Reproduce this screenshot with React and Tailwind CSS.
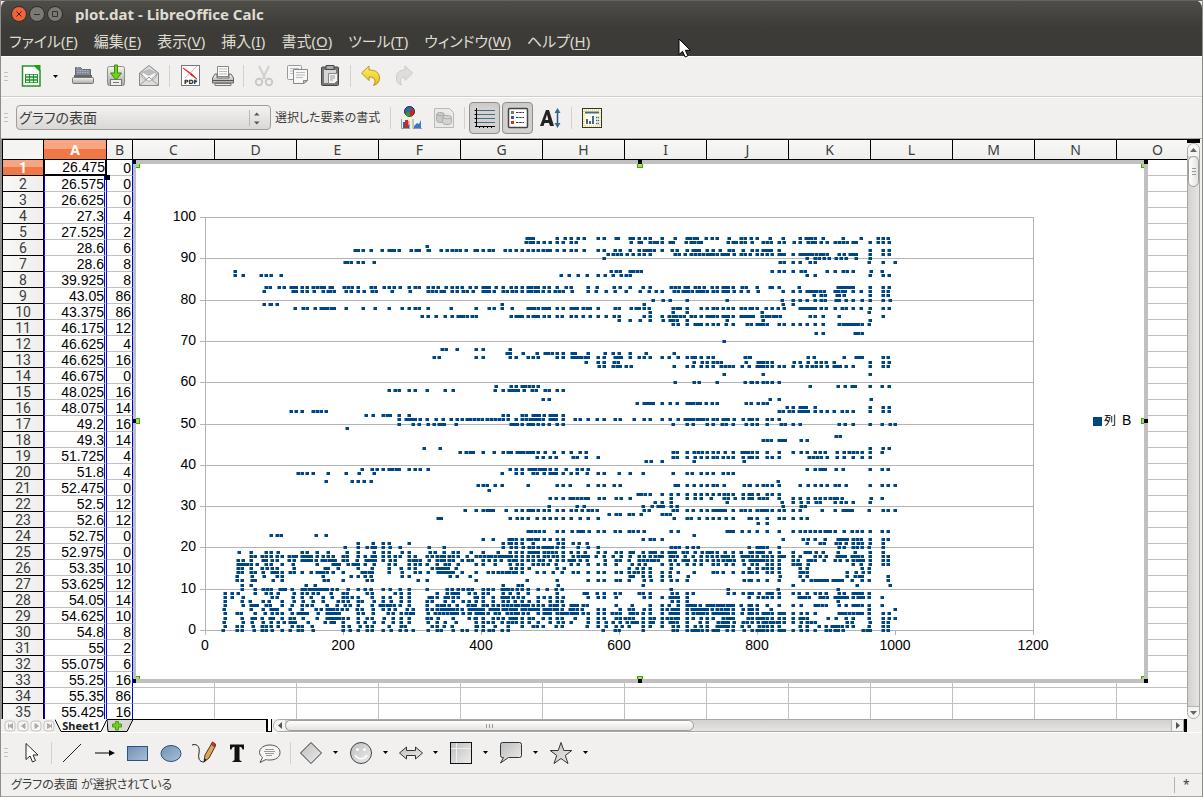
import React from "react";

/* ---------- scatter data: [value, samples of the left, middle and right block] ---------- */
const BLOCKS = [190, 470, 750];
const SAMPLES = [
  [95, "", "170-190 260 285 304 325 343 383 403 437 445 479 490 508 525 540 576 615 650-682 707 725 742 776 812 824", "3 22 59 100 149 167-182 196 220 278 334 385 400 415"],
  [94, "", "167-190 203 221 240 260 278 302 319 483 508 514 540 551 562 576 599 608 648 662-694 775 788 797 812 826", "5 38 52 64 88 103 131 149 173-196 214 232 256 268-292 308 319 359 385 398 418"],
  [93, "711", "", ""],
  [92, "496-505 520 543 577 596-612 628 664-677 688 713 718 754 770 785 799 811 829", "15-22 38 58 70 106-119 137 155 173 188 203 220-240 260 282 302 319 343 383 403 436 450 481 508 523-540 553 577 605 622 652 670-688 710 728 751 776 790 818", "5 22 38-64 86 359 398 416"],
  [91, "", "415 430-453 470 490 508 522 540 615-628 646 662 676 688 700 710-740 755-775 792 812 825 840", "0 22 37 52-66 88-103 130 149-197 209-230 268 281 300-319 359 398 416"],
  [90, "", "402", "170 194 208 223 238 257 274 287 317 359"],
  [89, "466 470 484 503 520 551", "", "89 103 128 149 181 194 358 398 436"],
  [87, "134", "422 437-450 479 490 502 514", "65 88 103 130 152 166 232 255 278 292 310 362 396"],
  [86, "134 160 214 229 244 274", "272 298 325 352 384 406 430 453 468-480", "171 194 359 400 417"],
  [83, "229-240 268 282 302 312 319 337 352 370 382 392-403 421 425 461-473 487 505 543-555 583-596 613 631 658 674 686 715 730 745 769 785 800 817", "0 18 38-58 77 100 124 139 157 173-204 222 237 260 287 303 354 382 433 449 479 520 540 604-614 628 645-655 676 688 703 726 742 758-775 790 815 829", "22 59 66 86 148 265-300 310 359 398 416"],
  [82, "222 310 319 337 352 371 400 413-421 432 469 484 503 521 545-557 607 661 715 727 739 753 763 787 800 819 832 848", "9 40-56 71 98-112 125 137 157 173-205 220 237 256-267 279 307 354 377 407 434 469 511 537 557 577 612 623 640-655 665 680-710 728 742 758-775 792 813 835", "24 100 130 149 170-197 209 223 255-285 310 334 360 398 415"],
  [81, "", "", "191 214 226 260 268 282 360 398 415"],
  [80, "", "550 579 599 652 772", "97 129 149 172 194 214 226 257 268 289 310 335 360 398 421"],
  [79, "223 239 244 262", "96 521", "100 130"],
  [78, "316 338 350 374 393-431 469 519 555 597 637 658 674 688 713 784", "18 56 71 97 125 173-203 220-238 260 279 302 311 322 340-360 383 434 448 484 499 508 522 538 610-630 650 692 710 728 742 760 775 790 812 824 840", "5 22 49 67 83 101 149-185 196 214 228 255 275 289 310 334 359 398 416"],
  [77, "", "540 610 652", "37 358"],
  [76, "695 713 739 764 785 803-818 832", "7 19 124 137-157 173 188-204 221 237 262 275 302 318 340 360 383 407 433 448 523 540 576 598-630 643 662-676 692 710-740 758-775 790 812-848", "5 37-90 181 196 220 266 398"],
  [75, "", "448 480 511 540 580 600-620 652 770", "38 361"],
  [74, "", "610 623 650 676-692 710 728 743 768 790 830", "3 22-39 52 88 103 128 149 172 194 220 268-325 335 358"],
  [72, "", "", "197 220 315-324 337"],
  [70, "", "763", ""],
  [68, "757 768 800", "18 40 121", ""],
  [67, "", "110-119 158 201 225-245 260 278 307-315 354 404 430 446 480 528 612", ""],
  [66, "732 748", "18 38 121 139 173 190 204 260 278 305-354 383 403 436-452 480 508 522 540 577 596 625 652 665-676 692 714 728 825 837", "0 175 193 283 318-335 398 415"],
  [65, "", "349 385 403 433-445 673 695 710 728 742 754 828", "25-40 52 67 131 149 173 197 214 228 253 361 398 416"],
  [64, "", "388 403 430-450 467 482 613 652 670 692 710 728 752 766-788 815 837", "22-40 52 65 88 103 130 152 172-185 197 214 230 253-270 287 308 360 398 414"],
  [62, "", "763", "38 359"],
  [60, "", "614 673 686 742 825 845", "4 22 38 52 65 88"],
  [59, "", "79 124 139 155-165 178 190 204", "180 265 285 307-315 360 397 416"],
  [58, "597 615 628 658 674 712 766 788", "75 100 116-145 161 187 199 224 238 260 280", ""],
  [56, "", "218 236", "60 88 362"],
  [55, "", "501 523-550 576 600 620 650-690 708 726 742 827 843", "3 25 40 52"],
  [54, "", "", "111 130 149-167 194 359 398 416"],
  [53, "304 319 337 368-380 394 407", "", "86 100 118 130 147-174 194 212 230 252 277 291 308 359 398 416"],
  [52, "527 549 580-601 628 656", "100 115 155-167 190-206 221 240-258 278", ""],
  [51, "626 647 657-676 690 712 737 758 784 800 815 830", "0-24 37 52-86 98 115 139 157-180 190-206 220 240-258 278 316-330 354 382 402 436 450 493 523 540 576 600 625 645-660 670-700 712 728 740 760-775 792 820 837", "5 22 50 67 86"],
  [50, "628 668 688 715 732 748-763 798", "124-142 157 175-190 204 220 238 260 278 608 652 668 710 728 755 768 790 828", "5 22 52 92 106 130 151 268 285 308 360 396 421 436"],
  [49, "470", "", ""],
  [47, "", "", "258-269"],
  [46, "", "", "40 52 64 88-104 152 172"],
  [44, "702 749", "", "361 398 416"],
  [43, "810 828-850", "5 39 73 98 115 124 140-190 204 225 252 279 302 330 349 608 622 650 673-695 712 728 745 765 790 816-835", "5 22 52 88 130 152 170 194 210 226 262 283 298-310 321 335 360 397"],
  [42, "", "202 220 241 258 310 322 347 383 608 622 652 676 692 710 728 742 758 775 790 820 837", "5 22 52 66 88 176-190 202 214 232 260 283 308 335 360"],
  [41, "", "529 542 575 673 823", ""],
  [39, "517 547-560 580 596-628 657 674 689 714", "121 139 157 177-225 240 258 289 322 337 353", "170 194 210-226 257 280 360 396 415"],
  [38, "323 337 350 370 415 467 507 553", "97 139 157 188-200 221 241-258 278 302 320 350 383 403 446 481 520 610 650 665 692 710 728 760 775 790", ""],
  [36, "407 486 505 521 543", "", "85"],
  [35, "", "25 40 52 75 96 175 260 278 300 354 383 403 433 450 614 625 650 673 692 710 728 742 763 822 838", "0 22 38 52 65 88 149 173 194 214 230 255 268 287 360 396 415 436"],
  [34, "", "58", ""],
  [33, "", "503-513 525 540 577 604 625 650 676 692 710 728 748 763 775 790 818 838", "5 25 52 67 88"],
  [32, "", "241 258 279 300-310 322-345 354 386 403 437 453 480 604 652 676 692 723 763-775 795 820 837", "5 26-40 52 88 130 149 173 194 210 226 240-262 277 362 396"],
  [31, "", "555 577 603 772", "96 130 152 173 197 210 256 274 287 310 360"],
  [30, "", "236 322 343 520 545 565-580 604 622", "100 152 166"],
  [29, "825 857", "18 40-70 107 138 157 175-190 204 222 236 260 279 302 317 335 354 366 380 523 538 608 622 650 668 692 710 728-765 790 813 826", "0 22-52 67 88 103 130 149 217 255 278-305 358 398 414 436"],
  [28, "", "418 437 450 478 490 514 576-600", ""],
  [27, "743 752", "121 140 157 175 202 221 240 258 278 302 330 354 383 613 650-662 688 712 730 748 768 790 837", "4 22 52 88 103 130 152 170"],
  [26, "", "", "24 52"],
  [24, "", "173-206 222 262 278 307 325-340 357 383 403 434 450 478-490 505 521 604 625 770-790 815 837", "22 52 88 130 149 165-179 194 210 226-241 256 283 307 321 336 360 396 415"],
  [23, "244 260 274 379 407", "673", ""],
  [22, "", "40 70 116-137 157 173-204 221 240 260 278 520 540-553 576", "100 158 173 194 226 265-290 308 321 334 360 398 415"],
  [21, "503 549 580 597 656", "100 116 124 137 157 190 263 278 310 327 352", "170 209 222 257-270 287 310 325 337 360 398"],
  [20, "466 504 530 546-556 580 600 631 716 763", "100 124 139 158 176-190 204 220-245 260 278 325 353 383 604-628 650 668 685 837", "22-40 52 88 268 283 308 322 335 358 398"],
  [19, "146 182 229 242 265 337 350 382 415 470 504 553 580 597 635 658 719 736 763 788 804 843", "4 38 84 121 139 157 176-204 221 235-258 278 302 325 345 383 404 437 453 479 490 520 540-555 577 596-615 640 652 676 695 710-725 742 765 790 812 840", "5 22-38 60 88 130 166-181 197 220 265 316 360 398"],
  [18, "182 196 216 229 242 260 275 297-318 337-363 382 398 415 430 460 472 504 526 546-556 580 597 614 630 658 674 712 726 740 752-763 776 788 804 830", "18-30 43-75 88-124 139 157 173 190-204 221 235 250 262 280 310 325-354 378 403 430 452 480 508 523 540 555-577 600-620 645 670 692 710 725 742 755-775 790 815-835", "5 22 38 52 67 86-103 130 149 194 210 228 260-285 305-325 337 360 398 415"],
  [17, "145 160 182 218 229 247 262 297 312 337-363 378 396-436 460 472 500 528-555 580 600 614 658-690 716 740-763 776 788 815 835", "5 40 58 75 92 118-139 157 175 190 207 220 240 260 280 296-312 330 350 404 437 450 478 508 520-553 565 600 614 640-655 676 692 712 728 745 760-780 792 818 840", "5-40 52 67 88 130 143 173 182 194 223 255 270 290 310-340 360 398 415"],
  [16, "145-170 182 200 229 244 275 310 382 430-447 475 488-504 526 553 597 614 656 674 690 712 740 764 776 803", "18 40 75 121 140 157 190 204 220 235 258 303 325 354 383 404 438 485 508 525 576 603 625 652 673 692 728 745 768 790 823", "5 22 52 67 88 130-150 173 310 334 360 398 415"],
  [15, "145 157 182 216-230 247 260 312 404-415 443 504 546 597 634 658 674 725 740-775 798", "124 137 157 176 260 281 478 500 520 540 604 838", "22 38 52 66 88 149 170 335 358"],
  [14, "145-157 182 196 220 247-262 275 300-312 337 363 382-398 412 430 460 517-545 597 637 674 690 715 745-790 815 858", "18 54 70 84 97-139 157 200 222 250 276 308 325 354 383 403 437 453 478-492 505 520 540 577 600 625 673 728-740 760 790 820 838", "5 22 52 65 88 149-170 290 318 340 358"],
  [13, "141 185 222 262-275 398 484 504 526 543 635 656 779 800", "0 480 490 520 540 577 599 655", "91 150 172 290 315-337 415"],
  [12, "141 157 185 196 250 275 403 415 460 530 545 685 712 857", "18 172 260 354 383 403 437 450 478 523 542 577 603 622 652 823 838", "4 25 50 88 158 184-232 250-275 307 337 358 415"],
  [11, "157 184 349 374", "98 145 157 265 520", "130 320 421"],
  [10, "157 196 220-242 270-285 307 337-412 425 440 475 504 526 543 580 601 630 657 712 770 787 803 819 835", "5 40 55 70 96-125 141 157 175 203 232 258 276 604 773", "85 265"],
  [9, "104 127 145 196 227 242 265 312 337 350 370 385 422 460-472 530 546 615 632 658 740 770 787-805 838", "15 40 54 98 121 143 173 260 343-352 380 403 436 450 508 520 540 605 620 650 668 773 792 818 837", "5 27 50-66 88 130 148 172 196 210 228 268 283 308-337 358"],
  [8, "104 127 160 247 262 310 337 363 400 427 458 470 487 504 546 580 600 634 657 716-725 740 765-775 788 803 860", "15 38 70 96-115 130-143 160 205 222 240 260 278 354 385 403 437 522 540 575 600-625 650 837", "25 38 52 65 88 148-166 178 210 220-232 255-290 310 325-340 358 396"],
  [7, "104 157 180 220 237 275 312 340 370 400 445 460 475 504 517 553 580 604 634 658 712-725 765 790 818 838", "18 40 70 100 115 135 157 176 204 240 260 276 605 625 650", "265"],
  [6, "104 160 182-200 227 240 275 307 337 352 367 412 440 465 480 504 546 570-600 612 630 658 712 740-763 778 800 835-855", "40 52 70 84 98 112-145 157-175 190 204 220 240-262 278 302-320 340 352 437 486 540 576 596 625 650-675 690 710-790 812 837", "4 22 52 88 130 152 194-215 228 268 287 308-325 337 358 396"],
  [5, "102 182 220 242-262 300 337 378 392 410-440 455 470 502 517 550 580 597 614 650 670 712 725 740 752-800 815 838", "5-40 60-85 98-139 157-204 222-260 276 300-320 337 383 403 450 478 490 521 540 576-590 605-625 650 665-710 725 742-775 790 820 837", "5 22 64 358 436"],
  [4, "104 142 152 196 225 247 262 275 307 323-350 385 412-447 504 520 548 595 610 632 647-670 715 736-770 784-800 818 838 860", "0 18-40 55 75 88 112-145 160 175 203 221-240 262-322 340 355 383 403 425 437 450 480-500 520 540 577 600-625 652 670-700 712 728-775 790 815 837", "5 22 38-55 67 88-103 130 152 172 194 268-285 296-310 322-337 358 398 418"],
  [3, "104 157 185 196 217 240-250 275 300 312 340 382 412-447 460 475 503 530 547 582 610 632 656 712 724 745 790 838 858", "15 38 70 84 98 121-139 157 176 188 220 240 262 277 315 355 383 403 437 450 466 478 490 520 540 553 577 592-625 650 670 692 710 728 760-790 835", "5 22-40 52 65 88 103 130 149-170 235 257 287 310 358 398 418 436"],
  [2, "103 160 185 220 242 265 282 300-315 353 404 422-432 460 504 526 552 580 610 634 656 715 740 764 798", "18 40 54 70 97 115-137 157 176 204 240 263 280 303 355 383 407 430 450 470 485-500 520 540 550 577 600-620 650 690 712 745-775 792 818-830", "5 25 38-80 88 103 130 152 172-194 290 305 360 398 415"],
  [1, "104 142 155 190 215 227 244 265 307 325 337 367 460 478 511 530 545 597 634 646 725 740 763 787 860", "18 38 75 115 157 188 202 220 258 276 350 383 407 437 455 478 520 540 577 608 625 652 675 692 712 740-775 790 815 837", "27 38 52 67 88 149 170 208 228 245-275 290 308 358 398 415"],
  [0, "100 142 155 193 215 229 247 275 300 325 337 370 460 480 504 530 545 580 604 630 648 670 715 740 754 790 815 830 858", "18 40 58 70 96 115 400 434 448 520 608 622 650 665-695 712 728-745 770 790 823", "5 22-40 52 65 88-103 130 152 172 194 228-240 254-265 280 340-350 360 398 415"],
];

const POINTS = SAMPLES.flatMap(([v, ...blocks]) =>
  blocks.flatMap((text, b) =>
    text
      .split(" ")
      .filter(Boolean)
      .flatMap((token) => {
        const [from, to = from] = token.split("-").map(Number);
        const out = [];
        const steps = Math.max(0, Math.round((to - from) / 10));
        for (let i = 0; i <= steps; i++) {
          const n = steps ? from + ((to - from) * i) / steps : from;
          out.push([Math.round(BLOCKS[b] + n / 3), Math.round(630 - v * 4.13)]);
        }
        return out;
      })
  )
);
const DOTS = POINTS.map(([x, y]) => `M${x - 1} ${y - 1}h3v3h-3z`).join("");
const HALO = POINTS.map(([x, y]) => `M${x - 2} ${y - 1}h4v3h-4z`).join("");

function Chart() {
  return (
    <svg width="1015" height="523" viewBox="133 160 1015 523" className="absolute left-[131px] top-[20px]" role="img" aria-label="列 B" shapeRendering="crispEdges">
      <rect x="133" y="160" width="1015" height="523" fill="#c0c0c0" />
      <rect x="136" y="164" width="1008" height="515" fill="#fff" />
      <g stroke="#b3b3b3" fill="none">
        {Array.from({ length: 11 }, (_, i) => (
          <path key={i} d={`M200 ${Math.round(630 - i * 41.3) + 0.5}H1033`} />
        ))}
        <path d="M205.5 217V635M1033.5 217V635M343.5 630v5M481.5 630v5M619.5 630v5M757.5 630v5M895.5 630v5" />
      </g>
      <path d={HALO} fill="#004586" opacity=".55" />
      <path d={DOTS} fill="#004586" />
      <g className="font-['Liberation_Sans',sans-serif] text-[14px]" fill="#000" shapeRendering="auto">
        {Array.from({ length: 11 }, (_, i) => (
          <text key={i} x="196" y={Math.round(634 - i * 41.3)} textAnchor="end">{i * 10}</text>
        ))}
        {[0, 200, 400, 600, 800, 1000, 1200].map((n) => (
          <text key={n} x={Math.round(205 + n * 0.69)} y="650" textAnchor="middle">{n}</text>
        ))}
        <text x="1122" y="425">B</text>
        <text x="1104" y="425" className="font-['Noto_Sans_CJK_JP',sans-serif] text-[12px]">列</text>
      </g>
      <rect x="1093" y="417" width="9" height="9" fill="#004586" />
      <g fill="#a4e065" stroke="#4a9a1c">
        {[[134, 162], [637, 162], [1141, 162], [134, 418], [1141, 418], [134, 676], [637, 676], [1141, 676]].map(([x, y]) => (
          <rect key={`${x}-${y}`} x={x + 0.5} y={y + 0.5} width="5" height="5" />
        ))}
      </g>
      <path d="M136 159h502v5h-502zM642 159h502v5h-502zM136 679h502v4h-502zM642 679h502v4h-502zM133 164h3v255h-3zM1144 164h4v255h-4zM133 423h3v256h-3zM1144 423h4v256h-4z" fill="#c0c0c0" />
      <path d="M133 160h3v4h-3zM638 160h4v4h-4zM1144 160h4v4h-4zM133 419h3v4h-3zM1144 419h4v4h-4zM133 679h3v4h-3zM638 679h4v4h-4zM1144 679h4v4h-4z" fill="#000" />
    </svg>
  );
}

/* ---------- sheet ---------- */
const A = "26.475 26.575 26.625 27.3 27.525 28.6 28.6 39.925 43.05 43.375 46.175 46.625 46.625 46.675 48.025 48.075 49.2 49.3 51.725 51.8 52.475 52.5 52.6 52.75 52.975 53.35 53.625 54.05 54.625 54.8 55 55.075 55.25 55.35 55.425".split(" ");
const B = "0 0 0 4 2 6 8 8 86 86 12 4 16 0 16 14 16 14 4 4 0 12 12 0 0 10 12 14 10 8 2 6 16 86 16".split(" ");
const COLS = "CDEFGHIJKLMNO".split("");

function Sheet() {
  return (
    <div className="relative min-w-0 flex-1 overflow-hidden border-t border-black bg-white">
      <table className="-mb-px w-[1155px] table-fixed border-separate border-spacing-0 text-[14px] leading-[14px]">
        <colgroup>
          <col className="w-[42px]" />
          <col className="w-[63px]" />
          <col className="w-[26px]" />
          {COLS.map((c) => <col key={c} className="w-[82px]" />)}
        </colgroup>
        <thead>
          <tr className="h-5 font-['Noto_Sans',sans-serif] leading-[19px] text-[#3c3c3c]">
            <th aria-label="Rows" className="border-b border-x border-black bg-[#f4f4f2] p-0" />
            <th scope="col" className="border-b border-r border-black bg-linear-to-b from-[#f7a583] from-50% to-[#f07746] to-50% p-0 font-bold text-white">A</th>
            <th scope="col" className="border-b border-r border-black bg-linear-to-b from-[#f8f8f7] to-[#efeeec] p-0 font-normal">B</th>
            {COLS.map((c) => (
              <th key={c} scope="col" className="border-b border-r border-black bg-linear-to-b from-[#f8f8f7] to-[#efeeec] p-0 font-normal">{c}</th>
            ))}
          </tr>
        </thead>
        <tbody>
          {A.map((a, i) => (
            <tr key={i} className="h-4">
              <th scope="row" className={i === 0
                ? "border-b border-x border-black bg-linear-to-b from-[#f7a583] from-50% to-[#f07746] to-50% p-0 pt-px font-[Roboto,sans-serif] font-bold text-white"
                : "border-b border-x border-black bg-linear-to-r from-[#f8f8f7] to-[#efeeec] p-0 pt-px font-[Roboto,sans-serif] font-normal text-[#3c3c3c]"}>{i + 1}</th>
              <td className={i === 0
                ? "border-b-2 border-l border-r-2 border-black p-0 text-right font-['Liberation_Sans',sans-serif]"
                : "border-b border-l border-r-3 border-b-[#c0c0c0] border-l-[#0000e0] border-r-[#0000e0] [border-right-style:double] p-0 text-right font-['Liberation_Sans',sans-serif]"}>{a}</td>
              <td className="border-b border-r border-b-[#c0c0c0] border-r-[#0000e0] p-0 pr-px text-right font-['Liberation_Sans',sans-serif]">{B[i]}</td>
              {COLS.map((c) => <td key={c} className="border-b border-r border-[#c0c0c0] p-0" />)}
            </tr>
          ))}
        </tbody>
      </table>
      <span className="absolute left-[103px] top-[35px] h-[5px] w-[5px] bg-black" />
      <Chart />
    </div>
  );
}

/* ---------- toolbar parts ---------- */
const Btn = ({ label, children, on }) => (
  <button
    type="button"
    aria-label={label}
    className={on
      ? "flex h-8 w-[31px] items-center justify-center rounded border border-[#8f8e8b] bg-[#d3d2d0] shadow-inner mx-px"
      : "flex h-8 w-[33px] items-center justify-center"}
  >
    <svg width="24" height="24" viewBox="0 0 24 24" fill="none">{children}</svg>
  </button>
);
const Drop = ({ label }) => (
  <button type="button" aria-label={label} className="flex h-8 w-[17px] items-center justify-center">
    <svg width="5" height="3" viewBox="0 0 5 3"><path d="M0 0h5L2.500 3z" fill="#000" /></svg>
  </button>
);
const Sep = () => <span className="flex w-2 justify-center"><span className="h-[22px] w-px bg-[#d3d1ce]" /></span>;
const Grip = () => (
  <span className="flex w-[13px] flex-col gap-[3px] pl-[3px]">
    <span className="h-px w-1 bg-[#c4c2be]" /><span className="h-px w-1 bg-[#c4c2be]" /><span className="h-px w-1 bg-[#c4c2be]" />
  </span>
);
const bar = "flex items-center border-b border-[#d0cecb] border-t border-t-white bg-[#f1f0ee] pb-px";

const Gradients = () => (
  <svg width="0" height="0" className="absolute" aria-hidden="true">
    <defs>
      <linearGradient id="metal" x1="0" y1="0" x2="0" y2="1"><stop offset="0" stopColor="#f4f4f4" /><stop offset="1" stopColor="#a8a8a8" /></linearGradient>
      <linearGradient id="shape" x1="0" y1="0" x2="1" y2="1"><stop offset="0" stopColor="#bdbdbd" /><stop offset="1" stopColor="#ededed" /></linearGradient>
      <linearGradient id="blue" x1="0" y1="0" x2="1" y2="1"><stop offset="0" stopColor="#6d90b5" /><stop offset="1" stopColor="#a9c0d8" /></linearGradient>
      <linearGradient id="gold" x1="0" y1="0" x2="0" y2="1"><stop offset="0" stopColor="#fff06a" /><stop offset="1" stopColor="#e8bd18" /></linearGradient>
    </defs>
  </svg>
);

function StandardBar() {
  return (
    <div role="toolbar" aria-label="標準" className={`${bar} h-[41px]`}>
      <Grip />
      <div className="mr-[2px] flex">
        <Btn label="新規">
          <path d="M3.500 2H16l5 5v15H3.500z" fill="#fff" stroke="#23922a" strokeWidth="1.500" />
          <path d="M15 1h6.500v6.500z" fill="#18a303" /><path d="M6 10h13v9H6z" fill="#23922a" />
          <path d="M7 11.500h3M11 11.500h3M15 11.500h3M7 14.500h3M11 14.500h3M15 14.500h3M7 17.500h3M11 17.500h3M15 17.500h3" stroke="#d9f5d5" strokeWidth="1.500" />
        </Btn>
        <Drop label="新規の種類" />
      </div>
      <Btn label="開く">
        <path d="M4.500 3.500h5l2 2h8v7h-15z" fill="#858996" stroke="#666a75" /><path d="M6 3.500h3M6 6.500h12M6 8.500h12" stroke="#a8b4cc" strokeDasharray="1.500 1" />
        <path d="M3 11h18v3H3z" fill="#666" /><rect x="1.500" y="13.500" width="21" height="6" rx="1" fill="url(#metal)" stroke="#777" />
      </Btn>
      <Btn label="保存">
        <rect x="3.500" y="2.500" width="17" height="19" rx="2" fill="url(#metal)" stroke="#8c8c8c" /><rect x="6.500" y="15.500" width="11" height="6" fill="#eee" stroke="#777" /><path d="M9 18.500h6" stroke="#777" />
        <path d="M10.500 1h3v8h4L12 16 6.500 9h4z" fill="#73d216" stroke="#3f8c06" />
      </Btn>
      <Btn label="メールで送信">
        <path d="M2.500 9L12 1.500 21.500 9v12.500h-19z" fill="#ddd" stroke="#888" /><path d="M5 8.500h14v5l-7 4-7-4z" fill="#f8f8f8" stroke="#aaa" /><path d="M2.500 21.500L12 13l9.500 8.500M2.500 9l7 6M21.500 9l-7 6" stroke="#999" /><path d="M4 8l8-3 8 3-8 4z" fill="#bbb" />
      </Btn>
      <Sep />
      <Btn label="PDF">
        <rect x="3.500" y="1.500" width="18" height="20" fill="#fff" stroke="#777" /><path d="M5 4l6 4 3 2 5 5-6-4-2-2z" fill="#e01b1b" stroke="#e01b1b" strokeWidth=".8" /><path d="M19 2l-6 6.500L7 14" stroke="#f2a0a0" />
        <text x="6" y="20" className="font-['DejaVu_Sans',sans-serif] text-[6px] font-bold" fill="#111">PDF</text>
      </Btn>
      <Btn label="印刷">
        <path d="M6.500 2.500h11v10h-11z" fill="#fff" stroke="#888" /><path d="M8 5h8M8 7.500h8M8 10h8" stroke="#bbb" /><path d="M4 10l-2.500 4v5h21v-5L20 10h-2v4H6v-4z" fill="url(#metal)" stroke="#666" /><path d="M4 19.500h16v2H4z" fill="#eee" stroke="#777" /><path d="M2 16.500h20" stroke="#555" />
      </Btn>
      <Sep />
      <Btn label="切り取り">
        <path d="M7 2l6.500 13M17 2L10.500 15" stroke="#d0d0ce" strokeWidth="2" /><circle cx="7" cy="18" r="3.200" stroke="#c8c8c6" strokeWidth="2" /><circle cx="17" cy="18" r="3.200" stroke="#c8c8c6" strokeWidth="2" />
      </Btn>
      <Btn label="コピー">
        <rect x="2.500" y="1.500" width="14" height="14" rx="1" fill="#f7f7f7" stroke="#999" /><path d="M5 4.500h9M5 7h9M5 9.500h9" stroke="#bbb" /><path d="M8.500 5.500h14v11l-4 3h-10z" fill="#f7f7f7" stroke="#888" /><path d="M11 8.500h9M11 11h9M11 13.500h7" stroke="#bbb" /><path d="M18.500 19.500v-3h4z" fill="#ccc" stroke="#888" />
      </Btn>
      <Btn label="貼り付け">
        <rect x="3.500" y="3" width="17" height="18.500" rx="1" fill="#777" stroke="#444" /><rect x="6" y="6" width="12" height="13" fill="#d5d5d5" /><path d="M8 1.500h8v4H8z" fill="#aaa" stroke="#444" /><path d="M10.500 9.500h9v7l-3 3h-6z" fill="#f4f4f4" stroke="#888" /><path d="M12 12h5M12 14h5M12 16h3" stroke="#999" />
      </Btn>
      <Sep />
      <Btn label="元に戻す"><path d="M2.500 9L10 2v4c7 0 10.500 3 10.500 8 0 4-2 6-6 7.500C17 18 17 13 10 13v3.500z" fill="url(#gold)" stroke="#bb9410" /></Btn>
      <Btn label="やり直し"><path d="M20.500 9L13 2v4C7 6 4.500 9 4.500 13.500c0 4 1 6 5 7.500-2-4-1-8 3.500-8v3.500z" fill="#dededc" stroke="#c9c9c7" /></Btn>
    </div>
  );
}

function FormatBar() {
  return (
    <div role="toolbar" aria-label="書式設定" className={`${bar} h-[42px] border-b-[#a9a7a4]`}>
      <Grip />
      <div className="relative ml-[2px]">
        <select id="element" className="h-[25px] w-[255px] appearance-none rounded border border-[#9f9d9a] bg-linear-to-b from-[#f3f2f1] to-[#d9d8d6] pl-[2px] text-[14px] leading-[18px] text-[#3c3c3c]">
          <option>グラフの表面</option>
        </select>
        <svg width="20" height="18" viewBox="0 0 20 18" className="pointer-events-none absolute right-1 top-1">
          <path d="M2.500 1v16" stroke="#bbb9b6" /><path d="M7 6.500h5.500L9.750 3.500zM7 12.500h5.500l-2.750 3z" fill="#555" />
        </svg>
      </div>
      <label htmlFor="element" className="ml-1 w-[111px] whitespace-nowrap text-[12px] text-[#3c3c3c]">選択した要素の書式</label>
      <Sep />
      <Btn label="グラフの種類">
        <circle cx="10.500" cy="5.500" r="5" fill="#3465a4" stroke="#222" /><path d="M10.500 5.500L6 8a5 5 0 008.500.5z" fill="#3a9a2a" /><path d="M10.500 5.500L15 3v3c0 3-2 4-4 4z" fill="#d81c1c" />
        <path d="M2.500 13v9.500H11M14 13v9.500h9" stroke="#999" /><path d="M4 16h2v6H4zM9 18h1.500v4H9z" fill="#26a" /><path d="M6 14h3v8H6z" fill="#e02020" /><path d="M9 15h1.500v4H9z" fill="#f0a020" /><path d="M15 20l3-3 2 1 2-4v8h-7z" fill="#3c78c0" />
      </Btn>
      <Btn label="データ表">
        <path d="M2.500 2.500h15l4 4v15h-19z" fill="#eaeae9" stroke="#b9b9b7" /><rect x="4.500" y="6.500" width="8" height="10" rx="3" fill="#c9c9c7" stroke="#aaa" /><rect x="10.500" y="9.500" width="9" height="9" rx="3" fill="#d4d4d2" stroke="#aaa" /><path d="M5 9c3 1 5 1 7 0M11 12c3 1 6 1 8 0" stroke="#aaa" />
      </Btn>
      <Sep />
      <Btn label="横方向グリッド" on>
        <path d="M4 4.500h18M4 8.500h18M4 12.500h18M4 16.500h18" stroke="#4a6a85" /><path d="M3.500 2v19M2 20.500h20" stroke="#000" /><path d="M1.500 4.500h2M1.500 8.500h2M1.500 12.500h2M1.500 16.500h2M6.500 20v2M10.500 20v2M14.500 20v2M18.500 20v2" stroke="#000" />
      </Btn>
      <Btn label="凡例" on>
        <rect x="2.500" y="2.500" width="19" height="19" rx="1" fill="#fff" stroke="#444" strokeWidth="1.500" /><path d="M5 5h3v3H5z" fill="#5d9150" /><path d="M5 10h3v3H5z" fill="#5a4b9a" /><path d="M5 15h3v3H5z" fill="#c0391b" /><path d="M10 6.500h8M10 11.500h8M10 16.500h8" stroke="#333" strokeDasharray="2.500 .7" />
      </Btn>
      <Btn label="文字の拡大縮小">
        <path d="M1 20L7 4h3l5 16h-4l-1-3H5.500l-1 3zM6.300 14h3L8 8.500z" fill="#222" fillRule="evenodd" /><path d="M18.500 4v15" stroke="#26567e" strokeWidth="1.500" /><path d="M15.500 7h6l-3-5zM15.500 17h6l-3 5z" fill="#336a96" />
      </Btn>
      <Sep />
      <Btn label="自動レイアウト">
        <rect x="2.500" y="2.500" width="19" height="19" fill="#fffef0" stroke="#333" /><rect x="4" y="4" width="16" height="16" stroke="#e3c500" strokeDasharray="1 1" /><path d="M5 6.500h14" stroke="#456a8c" strokeWidth="2" /><path d="M6 13h2v5H6zM9 15h2v3H9zM12 10h2v8h-2z" fill="#456a8c" /><path d="M16 11.500h3M16 14.500h3M16 17.500h3" stroke="#456a8c" strokeWidth="1.500" strokeDasharray="1.500 .5" />
      </Btn>
    </div>
  );
}

function DrawingBar() {
  return (
    <div role="toolbar" aria-label="図形描画" className={`${bar} h-[42px]`}>
      <Grip />
      <Btn label="選択"><path d="M7 2.500v16l4-3.500 2.500 6 3-1.500-2.500-5.500h5z" fill="#fff" stroke="#222" /></Btn>
      <Sep />
      <Btn label="線"><path d="M3 21L21 3" stroke="#222" /></Btn>
      <Btn label="矢印"><path d="M2 12h16" stroke="#000" /><path d="M16 9l6 3-6 3z" fill="#000" /></Btn>
      <Btn label="四角形"><rect x="1.500" y="5.500" width="20" height="14" fill="url(#blue)" stroke="#2f5278" /></Btn>
      <Btn label="楕円"><ellipse cx="12" cy="12.500" rx="10" ry="8" fill="url(#blue)" stroke="#2f5278" /></Btn>
      <Btn label="フリーハンド">
        <path d="M0 4c6-2 8 3 7 8s0 9 5 9" stroke="#222" /><path d="M12 21l1-7 7-12 4 2-7 13z" fill="#d8a65c" stroke="#5c2e10" /><path d="M19 3l1.500-2 3 2-1.500 2.500z" fill="#d03a3a" stroke="#922" /><path d="M12 21l.6-3.500 2 1.300z" fill="#111" />
      </Btn>
      <Btn label="テキスト"><path d="M5 3.500h14v5h-1.500c-.5-2-1-2.800-3-2.800V18c0 1.500.5 1.700 2 2v1h-9v-1c1.500-.3 2-.5 2-2V5.700c-2 0-2.500.8-3 2.800H5z" fill="#111" /></Btn>
      <Btn label="吹き出し"><path d="M12 4c6 0 10 3 10 7.500S18 19 12 19c-2 0-3 0-4-.5L2 21.500l2.500-5C3 15 1.500 13.500 1.500 11.500 1.500 7 6 4 12 4z" fill="#f5f5f5" stroke="#555" /><path d="M7 8.500h9M6 10.500h11M7 12.500h9M8 14.500h6" stroke="#999" /></Btn>
      <Sep />
      <Btn label="基本図形"><path d="M12 1.500L22.500 12 12 22.500 1.500 12z" fill="url(#shape)" stroke="#333" /></Btn><Drop label="基本図形の種類" />
      <Btn label="記号"><circle cx="12" cy="12" r="10.500" fill="url(#shape)" stroke="#444" /><circle cx="8.500" cy="8.500" r="1.500" fill="#fff" /><circle cx="15.500" cy="8.500" r="1.500" fill="#fff" /><path d="M6 14c3 5 9 5 12 0" stroke="#fff" strokeWidth="1.500" /></Btn><Drop label="記号の種類" />
      <Btn label="ブロック矢印"><path d="M.5 12l7-6v3.500h9V6l7 6-7 6v-3.500h-9V18z" fill="url(#shape)" stroke="#333" /></Btn><Drop label="ブロック矢印の種類" />
      <Btn label="フローチャート"><rect x="1.500" y="1.500" width="21" height="21" fill="url(#shape)" stroke="#111" /><path d="M7.500 2v20M2 7.500h20" stroke="#f0f0f0" /></Btn><Drop label="フローチャートの種類" />
      <Btn label="引き出し線"><path d="M3.500 1.500h17q2 0 2 2v11q0 2-2 2H9.500l-8 5.500 3-5.500h-1q-2 0-2-2v-11q0-2 2-2z" fill="url(#shape)" stroke="#333" /></Btn><Drop label="引き出し線の種類" />
      <Btn label="星"><path d="M12 1.500l2.800 8h8l-6.500 5 2.700 8-7-5-7 5 2.700-8-6.500-5h8z" fill="url(#shape)" stroke="#333" /></Btn><Drop label="星の種類" />
    </div>
  );
}

const MENUS = [["ファイル", "F"], ["編集", "E"], ["表示", "V"], ["挿入", "I"], ["書式", "O"], ["ツール", "T"], ["ウィンドウ", "W"], ["ヘルプ", "H"]];
const NAV = [["最初のシート", "M4.500 3.500v5M8.500 3.500v5L5 6z"], ["前のシート", "M8 3.500v5L4.500 6z"], ["次のシート", "M5 3.500v5L8.500 6z"], ["最後のシート", "M8.500 3.500v5M4.500 3.500v5L8 6z"]];

export default function App() {
  return (
    <div className="relative flex min-h-screen flex-col overflow-hidden border-x border-[#8e8c88] bg-[#f1f0ee] font-['Noto_Sans','Noto_Sans_CJK_JP',sans-serif] [font-feature-settings:'palt']">
      <Gradients />
      <header className="rounded-t-lg bg-linear-to-b from-[#504e49] to-[#3c3b37] to-50%">
        <div className="flex h-7 items-center border-t border-[#66645e] pb-px pl-[10px]">
          <div className="flex gap-[2px]">
            <button type="button" aria-label="閉じる"><svg width="16" height="16" viewBox="0 0 16 16"><circle cx="8" cy="8" r="7.500" fill="#ee6338" stroke="#2e2d2a" /><path d="M5.500 5.500l5 5m0-5l-5 5" stroke="#3c2018" /></svg></button>
            <button type="button" aria-label="最小化"><svg width="16" height="16" viewBox="0 0 16 16"><circle cx="8" cy="8" r="7.500" fill="#7b7971" stroke="#2e2d2a" /><path d="M5 8.500h6" stroke="#33322e" /></svg></button>
            <button type="button" aria-label="最大化"><svg width="16" height="16" viewBox="0 0 16 16"><circle cx="8" cy="8" r="7.500" fill="#7b7971" stroke="#2e2d2a" /><path d="M5.500 5.500h5v5h-5z" fill="none" stroke="#33322e" /></svg></button>
          </div>
          <h1 className="ml-3 text-[15px] font-bold leading-5 text-[#dfdbd2]">plot.dat - LibreOffice Calc</h1>
        </div>
        <nav className="flex h-7 items-center gap-4 pb-[2px] pl-2 text-[15px] text-[#dfdbd2]">
          {MENUS.map(([name, key]) => (
            <button key={key} type="button" className="whitespace-nowrap">{name}(<u className="underline-offset-2">{key}</u>)</button>
          ))}
        </nav>
      </header>
      <StandardBar />
      <FormatBar />
      <main className="flex border-l border-[#8e8c88] pr-[2px]">
        <Sheet />
        <div className="flex w-[13px] flex-col border-t-4 border-black">
          <div className="flex flex-1 flex-col rounded-full border border-[#a9a7a4] bg-linear-to-r from-[#d2d1ce] to-[#e6e5e3]">
            <button type="button" aria-label="上へ" className="flex h-3 items-center justify-center rounded-t-full bg-[#f4f4f3]"><svg width="7" height="4" viewBox="0 0 7 4"><path d="M0 4h7L3.500 0z" fill="#666" /></svg></button>
            <div className="flex h-[31px] flex-col items-center justify-center gap-[2px] rounded-full border border-[#a09e9b] bg-linear-to-r from-white to-[#e3e2e0]">
              <span className="h-px w-1 bg-[#999]" /><span className="h-px w-1 bg-[#999]" /><span className="h-px w-1 bg-[#999]" />
            </div>
            <span className="flex-1" />
            <button type="button" aria-label="下へ" className="flex h-3 items-center justify-center rounded-b-full border-t border-[#b5b3b0] bg-[#f4f4f3]"><svg width="7" height="4" viewBox="0 0 7 4"><path d="M0 0h7L3.500 4z" fill="#666" /></svg></button>
          </div>
        </div>
      </main>
      <div className="flex h-[13px] items-stretch pr-[15px]">
        <div className="flex items-center gap-px pl-[3px]">
          {NAV.map(([label, d]) => (
            <button key={label} type="button" aria-label={label}><svg width="12" height="12" viewBox="0 0 12 12"><rect x="1" y="1" width="10" height="10" rx="3" fill="#f6f6f5" stroke="#c4c2bf" /><path d={d} fill="#aaa" stroke="#aaa" /></svg></button>
          ))}
        </div>
        <button type="button" className="relative flex w-[52px] items-center justify-center text-[11px] font-bold leading-3 text-[#222]">
          <svg width="52" height="13" viewBox="0 0 52 13" className="absolute inset-0"><path d="M0 0.500L6 12.500H46L52 0.500" fill="#fff" stroke="#000" /><path d="M1 0h50" stroke="#fff" /></svg>
          <span className="relative">Sheet1</span>
        </button>
        <button type="button" aria-label="シートの追加" className="w-[26px]">
          <svg width="26" height="13" viewBox="0 0 26 13"><path d="M0 .5h26L20 12.500H1z" fill="#d9d8d6" stroke="#000" /><path d="M8.500 2.500h3v2.500h3v3h-3v3h-3v-3h-3v-3h3z" fill="#73d216" stroke="#4a9a1c" /></svg>
        </button>
        <div className="w-[133px] border-t border-black" />
        <div className="w-[6px] border-l-2 border-r border-b border-black bg-white" />
        <div className="ml-px flex flex-1 items-stretch rounded-l-full border border-[#a9a7a4] bg-linear-to-b from-[#d2d1ce] to-[#e6e5e3]">
          <button type="button" aria-label="左へ" className="flex w-[11px] items-center justify-center rounded-l-full bg-[#f4f4f3]"><svg width="4" height="7" viewBox="0 0 4 7"><path d="M4 0v7L0 3.500z" fill="#555" /></svg></button>
          <div className="flex w-[45%] items-center justify-center gap-[2px] rounded-full border border-[#a09e9b] bg-linear-to-b from-white to-[#e3e2e0]">
            <span className="h-1 w-px bg-[#999]" /><span className="h-1 w-px bg-[#999]" /><span className="h-1 w-px bg-[#999]" />
          </div>
          <span className="flex-1" />
          <button type="button" aria-label="右へ" className="flex w-[12px] items-center justify-center border-l border-[#b5b3b0] bg-[#f4f4f3]"><svg width="4" height="7" viewBox="0 0 4 7"><path d="M0 0v7l4-3.500z" fill="#555" /></svg></button>
        </div>
        <span className="w-[3px] bg-black" />
      </div>
      <DrawingBar />
      <footer className="flex h-[23px] items-center border-b border-[#a9a7a4] pl-[10px] text-[12px] text-[#3c3c3c]">
        <span className="flex-1">グラフの表面 が選択されている</span>
        <span className="flex h-4 w-[28px] items-center border-l border-[#b5b3b0] pl-2">*</span>
      </footer>
      <svg width="14" height="20" viewBox="0 0 14 20" className="absolute left-[677px] top-[38px]" aria-hidden="true"><path d="M1 1v15.500l3.600-3.200 2.500 5.700 2.800-1.200-2.500-5.500h5z" fill="#fff" stroke="#000" /></svg>
    </div>
  );
}
